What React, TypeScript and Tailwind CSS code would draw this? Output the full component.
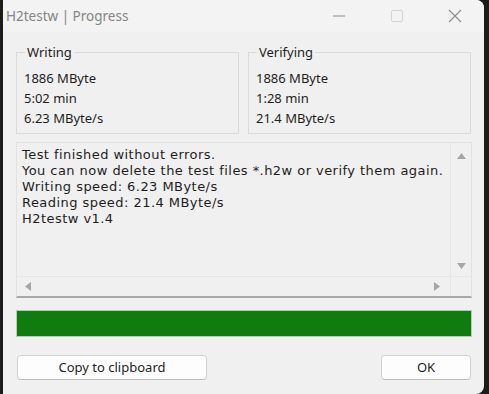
import React from "react";

function Arrow({ dir }: { dir: "up" | "down" | "left" | "right" }) {
  const pts: Record<string, string> = {
    up: "0,7 4.5,1 9,7",
    down: "0,1 4.5,7 9,1",
    left: "7,0 1,4.5 7,9",
    right: "1,0 7,4.5 1,9",
  };
  const vertical = dir === "up" || dir === "down";
  return (
    <svg width={vertical ? 9 : 8} height={vertical ? 8 : 9} viewBox={vertical ? "0 0 9 8" : "0 0 8 9"}>
      <polygon points={pts[dir]} fill="#a6a6a6" />
    </svg>
  );
}

function Group({ title, lines }: { title: string; lines: string[] }) {
  return (
    <div className="relative flex-1 h-[82px] border border-[#dadada]">
      <span className="absolute left-[8px] top-[-9px] bg-[#f0f0f0] px-[2px] text-[13px] leading-[16px] text-[#1e1e1e]">
        {title}
      </span>
      <div className="pt-[15px] pl-[7px] flex flex-col">
        {lines.map((l) => (
          <div key={l} className="h-[20px] leading-[20px] text-[13px] text-[#1e1e1e]">
            {l}
          </div>
        ))}
      </div>
    </div>
  );
}

export default function App() {
  const log = [
    "Test finished without errors.",
    "You can now delete the test files *.h2w or verify them again.",
    "Writing speed: 6.23 MByte/s",
    "Reading speed: 21.4 MByte/s",
    "H2testw v1.4",
  ];
  return (
    <div
      className="w-[489px] h-[394px] bg-[#1c1c1c] flex overflow-hidden"
      style={{ fontFamily: '"Noto Sans", "Open Sans", sans-serif' }}
    >
      <div className="ml-[3px] w-[481px] h-full bg-[#f0f0f0] rounded-tr-[8px] rounded-br-[8px] flex flex-col">
        {/* Title bar */}
        <div className="h-[32px] flex items-center bg-[#f3f3f3] rounded-tr-[8px]">
          <span className="ml-[3px] text-[13.5px] text-[#858585]">H2testw | Progress</span>
          <div className="ml-auto flex items-center">
            <div className="w-[58px] h-[32px] flex items-center justify-center">
              <svg width="12" height="12" viewBox="0 0 12 12">
                <line x1="0" y1="6" x2="12" y2="6" stroke="#8a8a8a" strokeWidth="1" />
              </svg>
            </div>
            <div className="w-[58px] h-[32px] flex items-center justify-center">
              <svg width="12" height="12" viewBox="0 0 12 12">
                <rect x="0.5" y="0.5" width="11" height="11" rx="1.5" fill="none" stroke="#d2d2d2" strokeWidth="1" />
              </svg>
            </div>
            <div className="w-[58px] h-[32px] flex items-center justify-center">
              <svg width="14" height="14" viewBox="0 0 14 14">
                <path d="M1 1 L13 13 M13 1 L1 13" stroke="#8a8a8a" strokeWidth="1.1" />
              </svg>
            </div>
          </div>
        </div>

        {/* Content */}
        <div className="flex flex-col pl-[13px] pr-[12px] pt-[20px]">
          <div className="flex gap-[9px] pr-[1px]">
            <Group title="Writing" lines={["1886 MByte", "5:02 min", "6.23 MByte/s"]} />
            <Group title="Verifying" lines={["1886 MByte", "1:28 min", "21.4 MByte/s"]} />
          </div>

          {/* Log box */}
          <div className="mt-[8px] h-[156px] border border-[#e2e2e2] border-b-[#a9a9a9] border-b-2 flex flex-col">
            <div className="flex flex-1 min-h-0">
              <div
                className="flex-1 pl-[5px] pt-[4px] bg-[#f0f0f0] overflow-hidden"
                style={{ fontFamily: '"DejaVu Sans", sans-serif' }}
              >
                {log.map((l) => (
                  <div
                    key={l}
                    className="h-[16px] leading-[16px] text-[13px] tracking-[0.45px] text-[#1e1e1e] whitespace-nowrap"
                  >
                    {l}
                  </div>
                ))}
              </div>
              <div className="w-[21px] border-l border-[#e6e6e6] flex flex-col items-center justify-between pt-[9px] pb-[6px]">
                <Arrow dir="up" />
                <Arrow dir="down" />
              </div>
            </div>
            <div className="h-[20px] flex border-t border-[#e6e6e6]">
              <div className="flex-1 flex items-center justify-between pl-[7px] pr-[9px]">
                <Arrow dir="left" />
                <Arrow dir="right" />
              </div>
              <div className="w-[21px] border-l border-[#e6e6e6]" />
            </div>
          </div>

          {/* Progress */}
          <div className="mt-[12px] h-[27px] border border-[#b9c9b9] bg-[#107c10]" />

          {/* Buttons */}
          <div className="mt-[18px] flex justify-between pl-[1px] pr-[1px]">
            <button className="w-[190px] h-[25px] bg-[#fdfdfd] border border-[#d3d3d3] border-b-[#bdbdbd] rounded-[4px] text-[13px] text-[#1e1e1e]">
              Copy to clipboard
            </button>
            <button className="w-[90px] h-[25px] bg-[#fdfdfd] border border-[#d3d3d3] border-b-[#bdbdbd] rounded-[4px] text-[13px] text-[#1e1e1e]">
              OK
            </button>
          </div>
        </div>
      </div>
    </div>
  );
}
